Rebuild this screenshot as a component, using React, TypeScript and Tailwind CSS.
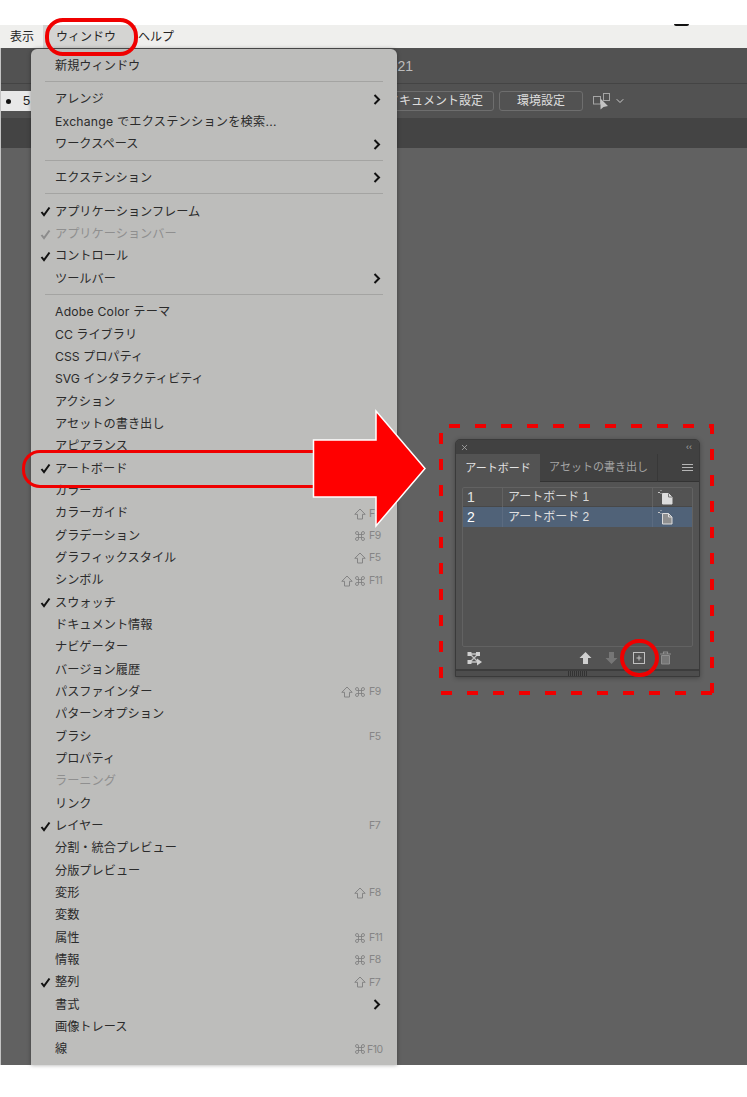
import React from "react";
import { Command, X, ChevronDown } from "lucide-react";

const FONT = '"Liberation Sans", "Noto Sans CJK JP", sans-serif';
const MENU_FONT = 'Inter, "Noto Sans CJK JP", sans-serif';

type Item = {
  t: string;
  check?: boolean;
  off?: boolean;
  sub?: boolean;
  shift?: boolean;
  cmd?: boolean;
  key?: string;
  wide?: boolean;
};

const groups: Item[][] = [
  [{ t: "新規ウィンドウ" }],
  [
    { t: "アレンジ", sub: true },
    { t: "Exchange でエクステンションを検索...", wide: true },
    { t: "ワークスペース", sub: true },
  ],
  [{ t: "エクステンション", sub: true }],
  [
    { t: "アプリケーションフレーム", check: true },
    { t: "アプリケーションバー", check: true, off: true },
    { t: "コントロール", check: true },
    { t: "ツールバー", sub: true },
  ],
  [
    { t: "Adobe Color テーマ", wide: true },
    { t: "CC ライブラリ" },
    { t: "CSS プロパティ" },
    { t: "SVG インタラクティビティ" },
    { t: "アクション" },
    { t: "アセットの書き出し" },
    { t: "アピアランス" },
    { t: "アートボード", check: true },
    { t: "カラー" },
    { t: "カラーガイド", shift: true, key: "F3" },
    { t: "グラデーション", cmd: true, key: "F9" },
    { t: "グラフィックスタイル", shift: true, key: "F5" },
    { t: "シンボル", shift: true, cmd: true, key: "F11" },
    { t: "スウォッチ", check: true },
    { t: "ドキュメント情報" },
    { t: "ナビゲーター" },
    { t: "バージョン履歴" },
    { t: "パスファインダー", shift: true, cmd: true, key: "F9" },
    { t: "パターンオプション" },
    { t: "ブラシ", key: "F5" },
    { t: "プロパティ" },
    { t: "ラーニング", off: true },
    { t: "リンク" },
    { t: "レイヤー", check: true, key: "F7" },
    { t: "分割・統合プレビュー" },
    { t: "分版プレビュー" },
    { t: "変形", shift: true, key: "F8" },
    { t: "変数" },
    { t: "属性", cmd: true, key: "F11" },
    { t: "情報", cmd: true, key: "F8" },
    { t: "整列", check: true, shift: true, key: "F7" },
    { t: "書式", sub: true },
    { t: "画像トレース" },
    { t: "線", cmd: true, key: "F10" },
  ],
];

function Check({ color }: { color: string }) {
  return (
    <svg width="11" height="11" viewBox="0 0 11 11" className="shrink-0">
      <path d="M1.5 6 L4 9.2 L9.5 1.5" fill="none" stroke={color} strokeWidth="2" />
    </svg>
  );
}

function ShiftIcon() {
  return (
    <svg width="12" height="12" viewBox="0 0 12 12" className="shrink-0">
      <path d="M6 1 L11.2 6.3 H8.5 V11 H3.5 V6.3 H.8 Z" fill="none" stroke="#848484" strokeWidth="1" />
    </svg>
  );
}

function Row({ item }: { item: Item }) {
  return (
    <div className="flex h-[22.33px] items-center pl-[9px] pr-[13px] pt-[1px]">
      <div className="flex w-[15px] shrink-0 items-center">
        {item.check && <Check color={item.off ? "#8c8c8c" : "#111111"} />}
      </div>
      <span
        className={
          item.off
            ? "text-[12.2px] text-[#8f8f8f]"
            : item.wide
              ? "text-[12.2px] tracking-[0.22px] text-[#2b2b2b]"
              : "text-[12.2px] text-[#2b2b2b]"
        }
      >
        {item.t}
      </span>
      <div className="ml-auto flex items-center">
        {item.sub && (
          <svg width="8" height="11" viewBox="0 0 8 11" className="mr-[3px]">
            <path d="M1.5 1 L6 5.5 L1.5 10" fill="none" stroke="#111111" strokeWidth="2" />
          </svg>
        )}
        {item.shift && <ShiftIcon />}
        {item.cmd && <Command size={12} strokeWidth={1.7} className="ml-[1px] text-[#808080]" />}
        {item.key && (
          <span
            className={
              item.key === "F10"
                ? "ml-[1px] w-[17px] text-[10.5px] tracking-[-0.5px] text-[#858585]"
                : "ml-[3px] w-[15px] text-[10.5px] tracking-[-0.5px] text-[#858585]"
            }
          >
            {item.key}
          </span>
        )}
      </div>
    </div>
  );
}

function Menu() {
  return (
    <div
      className="absolute left-[31px] top-[49px] h-[1016px] w-[366px] overflow-hidden rounded-t-[6px] bg-[#bdbdbb] pt-[5px] shadow-[0_0_4px_rgba(0,0,0,0.35)]"
      style={{ fontFamily: MENU_FONT }}
    >
      {groups.map((g, i) => (
        <div key={i}>
          {i > 0 && (
            <div className="flex h-[11.5px] items-center pb-[1px] pl-[14px] pr-[14px]">
              <div className="h-px w-full bg-[#a4a4a2]" />
            </div>
          )}
          {g.map((it) => (
            <Row key={it.t} item={it} />
          ))}
        </div>
      ))}
    </div>
  );
}

function DocIcon({ filled }: { filled?: boolean }) {
  return (
    <svg width="15" height="15" viewBox="0 0 15 15" className="block">
      <path d="M0 2.5h2M3 0v1M3 3v1" stroke="#c4c4c4" strokeWidth="1" />
      <path
        d="M4.5 3.5h6l3.5 3.5v7H4.5z"
        fill={filled ? "#8f8f8f" : "#dcdcdc"}
        stroke="#dcdcdc"
        strokeWidth="1"
      />
      <path d="M10.5 3.5v3.5h3.5" fill="none" stroke={filled ? "#dcdcdc" : "#777777"} strokeWidth="1" />
    </svg>
  );
}

function Panel() {
  return (
    <div className="flex h-[238px] w-[245px] flex-col overflow-hidden rounded-t-[5px] border border-[#3a3a3a] bg-[#535353] shadow-[0_1px_5px_rgba(0,0,0,0.3)]">
      <div className="flex h-[14px] shrink-0 items-center justify-between bg-[#414141] pl-[4px] pr-[7px]">
        <X size={9} strokeWidth={2} className="text-[#b0b0b0]" />
        <span className="text-[9px] leading-none text-[#a8a8a8]">‹‹</span>
      </div>
      <div className="flex h-[28px] shrink-0 bg-[#414141]">
        <div className="flex w-[84px] items-center justify-center bg-[#535353] text-[11px] text-[#e4e4e4]">アートボード</div>
        <div className="flex w-[118px] items-center justify-center border-b border-r border-b-[#333333] border-r-[#383838] text-[11px] text-[#a5a5a5]">
          アセットの書き出し
        </div>
        <div className="flex flex-1 items-center justify-end border-b border-[#333333] pr-[6px]">
          <div className="flex w-[11px] flex-col gap-[2px]">
            <div className="h-px bg-[#b5b5b5]" />
            <div className="h-px bg-[#b5b5b5]" />
            <div className="h-px bg-[#b5b5b5]" />
          </div>
        </div>
      </div>
      <div className="mx-[6px] mt-[5px] h-[160px] shrink-0 rounded-[2px] border border-[#626262]">
        <div className="flex h-[19px] items-center border-b border-[#484848] text-[#d8d8d8]">
          <span className="w-[40px] border-r border-[#626262] pl-[4px] text-[14px] leading-[19px] text-[#e2e2e2]">1</span>
          <span className="w-[150px] border-r border-[#626262] pl-[5px] text-[12px] leading-[19px]">アートボード 1</span>
          <span className="pl-[5px]">
            <DocIcon />
          </span>
        </div>
        <div className="flex h-[20px] items-center bg-[#506278] text-[#e0e0e0]">
          <span className="w-[40px] border-r border-[#5b6b80] pl-[4px] text-[14px] leading-[20px] text-white">2</span>
          <span className="w-[150px] border-r border-[#5b6b80] pl-[5px] text-[12px] leading-[20px]">アートボード 2</span>
          <span className="pl-[5px]">
            <DocIcon filled />
          </span>
        </div>
      </div>
      <div className="flex h-[22px] shrink-0 items-center pl-[11px]">
        <svg width="15" height="15" viewBox="0 0 15 15">
          <path d="M3 3 L11 3 M3 3 L11 11 M11 3 L3 11 M3 11 L11 11" stroke="#c2c2c2" strokeWidth="1.3" fill="none" />
          <rect x="0.5" y="1" width="4" height="4" fill="#d0d0d0" />
          <rect x="9" y="1" width="4" height="4" fill="#d0d0d0" />
          <rect x="0.5" y="9" width="4" height="4" fill="#d0d0d0" />
          <path d="M10 7.5 L15 11 L10 14.5z" fill="#d0d0d0" />
        </svg>
        <svg width="13" height="14" viewBox="0 0 13 14" className="ml-[97px]">
          <path d="M6.5 1 L12.5 7 H9 V13 H4 V7 H.5z" fill="#cfcfcf" />
        </svg>
        <svg width="13" height="14" viewBox="0 0 13 14" className="ml-[13px]">
          <path d="M6.5 13 L12.5 7 H9 V1 H4 V7 H.5z" fill="#767676" />
        </svg>
        <svg width="12" height="12" viewBox="0 0 12 12" className="ml-[15px]">
          <rect x="0.5" y="0.5" width="11" height="11" fill="none" stroke="#c0c0c0" />
          <path d="M6 3.5v5M3.5 6h5" stroke="#c0c0c0" />
        </svg>
        <svg width="13" height="14" viewBox="0 0 13 14" className="ml-[14px]">
          <path d="M1 3h11M4.5 3V1h4v2" fill="none" stroke="#8e8e8e" strokeWidth="1.2" />
          <path d="M2.5 4.5h8V13h-8z" fill="#777777" stroke="#8e8e8e" />
        </svg>
      </div>
      <div className="flex flex-1 items-center justify-center border-t-2 border-[#3c3c3c] bg-[#4d4d4d]">
        <div className="h-[5px] w-[20px] bg-[repeating-linear-gradient(90deg,#333333_0,#333333_1px,transparent_1px,transparent_2px)]" />
      </div>
    </div>
  );
}

function Annotations() {
  return (
    <>
      <div className="absolute left-[45px] top-[18px] h-[38px] w-[93px] rounded-[18px] border-[4px] border-[#f00000]" />
      <div className="absolute left-[22px] top-[450px] h-[38px] w-[300px] rounded-l-[18px] border-[3.5px] border-r-0 border-[#f00000]" />
      <svg width="747" height="1097" viewBox="0 0 747 1097" className="pointer-events-none absolute left-0 top-0">
        <path
          d="M313.5 440 H376 V411 L425 468.5 L376 526 V497 H313.5 Z"
          fill="#ff0000"
          stroke="#ffffff"
          strokeWidth="1.5"
        />
        <path d="M441 426 H712 V693" fill="none" stroke="#f00000" strokeWidth="4" strokeDasharray="11 15" strokeDashoffset="-8" />
        <path d="M712 693 H441 V426" fill="none" stroke="#f00000" strokeWidth="4" strokeDasharray="11 15" />
      </svg>
      <div className="absolute left-[620px] top-[639px] h-[38px] w-[39px] rounded-full border-[4px] border-[#f00000]" />
      <div className="absolute left-[674px] top-[24px] h-[2px] w-[15px] rounded-b-full bg-[#111111]" />
    </>
  );
}

export default function App() {
  return (
    <div className="relative flex h-[1097px] w-[747px] flex-col overflow-hidden bg-white" style={{ fontFamily: FONT }}>
      <div className="h-[25px] shrink-0 bg-white" />
      <div className="flex h-[23px] shrink-0 items-center bg-[#efefed] text-[12px] text-[#252525] shadow-[0_1px_1px_rgba(0,0,0,0.3)]">
        <span className="ml-[10px]">表示</span>
        <span className="ml-[9px] flex h-full w-[93px] items-center bg-[#d4d4d2] pl-[13px]">ウィンドウ</span>
        <span className="ml-[2px]">ヘルプ</span>
      </div>
      <div className="flex h-[1017px] shrink-0 flex-col border-l border-[#c4c4c4] bg-[#616161]">
        <div className="flex h-[36px] shrink-0 items-center border-b border-[#444444] bg-[#525252] pl-[381px] pt-[2px] text-[14px] text-[#bdbdbd]">
          2021
        </div>
        <div className="flex h-[35px] shrink-0 items-center border-b border-[#444444] bg-[#525252]">
          <div className="flex h-[20px] w-[30px] items-center bg-[#e8e8e8] text-[13px] text-[#222222]">
            <span className="ml-[5px] h-[5px] w-[5px] rounded-full bg-[#111111]" />
            <span className="ml-[12px]">5</span>
          </div>
          <div className="ml-[344px] flex h-[20px] w-[119px] items-center rounded-[3px] border border-[#6e6e6e] pl-[11px] text-[12px] text-[#dedede]">
            ドキュメント設定
          </div>
          <div className="ml-[5px] flex h-[20px] w-[84px] items-center justify-center rounded-[3px] border border-[#6e6e6e] text-[12px] text-[#dedede]">
            環境設定
          </div>
          <svg width="18" height="17" viewBox="0 0 18 17" className="ml-[10px]">
            <rect x="0.5" y="3.5" width="7" height="7.5" fill="none" stroke="#a5a5a5" />
            <rect x="10.5" y="0.5" width="6" height="7" fill="none" stroke="#a5a5a5" />
            <path d="M7.5 5.5 L7.5 16.5 L10.5 14 L15 13z" fill="#c4c4c4" />
          </svg>
          <ChevronDown size={12} strokeWidth={2} className="ml-[3px] text-[#cccccc]" />
        </div>
        <div className="h-[29px] shrink-0 bg-[#444444]" />
        <div className="flex-1 pl-[454px] pt-[291px]">
          <Panel />
        </div>
      </div>
      <div className="flex-1 bg-white" />
      <Menu />
      <Annotations />
    </div>
  );
}
